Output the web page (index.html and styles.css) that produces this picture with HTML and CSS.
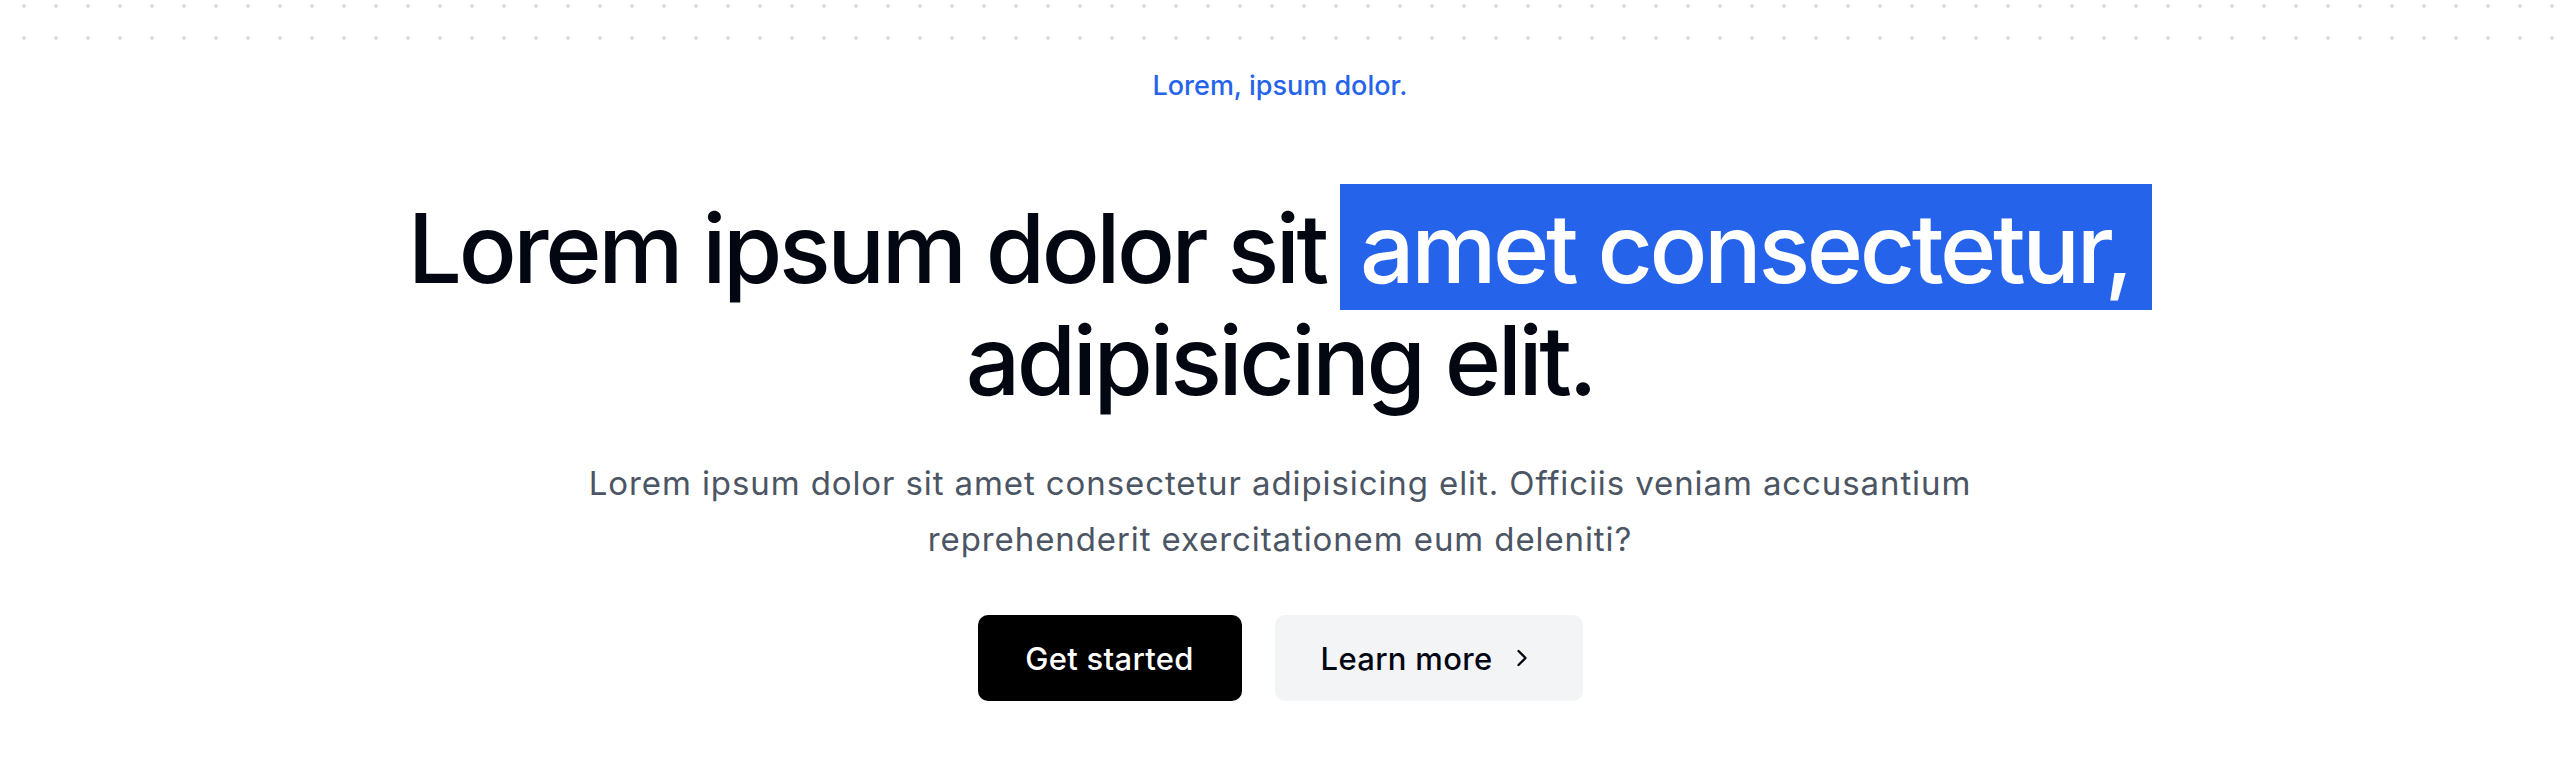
FILE: index.html
```html
<!DOCTYPE html>
<html lang="en">
<head>
<meta charset="utf-8">
<title>Hero</title>
<link rel="stylesheet" href="styles.css">
</head>
<body>
<div class="dots" aria-hidden="true"></div>
<main class="hero">
  <p class="eyebrow">Lorem, ipsum dolor.</p>
  <h1 class="title">Lorem ipsum dolor sit <span class="mark">amet consectetur,</span> adipisicing elit.</h1>
  <p class="lead">Lorem ipsum dolor sit amet consectetur adipisicing elit. Officiis veniam accusantium reprehenderit exercitationem eum deleniti?</p>
  <div class="actions">
    <a class="btn btn-primary" href="#">Get started</a>
    <a class="btn btn-secondary" href="#">Learn more
      <svg class="chev" viewBox="0 0 24 24" width="24" height="24" fill="none" stroke="currentColor" stroke-width="2" stroke-linecap="round" stroke-linejoin="round"><path d="M9 6l6 6-6 6"/></svg>
    </a>
  </div>
</main>
</body>
</html>
```
FILE: styles.css
```css
html, body {
  margin: 0;
  padding: 0;
  background: #ffffff;
}
body {
  position: relative;
  font-family: Inter, "Noto Sans", "Liberation Sans", sans-serif;
  color: #030712;
  min-height: 768px;
}
.dots {
  position: absolute;
  top: 0;
  left: 0;
  right: 0;
  height: 56px;
  background-image: radial-gradient(circle, #dcdde1 1.6px, transparent 2px);
  background-size: 32px 32px;
  background-position: 8px -10px;
  pointer-events: none;
}
.hero {
  position: relative;
  display: flex;
  flex-direction: column;
  align-items: center;
  text-align: center;
  padding-top: 66px;
}
.eyebrow {
  margin: 0;
  font-size: 27px;
  line-height: 40px;
  font-weight: 500;
  color: #2563eb;
}
.title {
  margin: 86px 0 0;
  font-size: 96px;
  line-height: 112px;
  font-weight: 500;
  letter-spacing: -3.4px;
  color: #030712;
  max-width: 1800px;
}
.mark {
  background: #2563eb;
  color: #ffffff;
  padding: 6px 22px 4px 20px;
  margin-left: -8px;
}
.lead {
  margin: 39px 0 0;
  max-width: 1480px;
  font-size: 33px;
  line-height: 56px;
  letter-spacing: 0.9px;
  color: #4b5563;
}
.actions {
  display: flex;
  gap: 33px;
  margin-top: 48px;
}
.btn {
  display: inline-flex;
  align-items: center;
  justify-content: center;
  height: 86px;
  box-sizing: border-box;
  border-radius: 10px;
  font-size: 31px;
  font-weight: 500;
  letter-spacing: 0.3px;
  text-decoration: none;
}
.btn-primary {
  width: 264px;
  background: #000000;
  color: #ffffff;
}
.btn-secondary {
  width: 308px;
  gap: 16px;
  background: #f3f4f6;
  color: #030712;
}
.chev {
  width: 28px;
  height: 28px;
}
```
